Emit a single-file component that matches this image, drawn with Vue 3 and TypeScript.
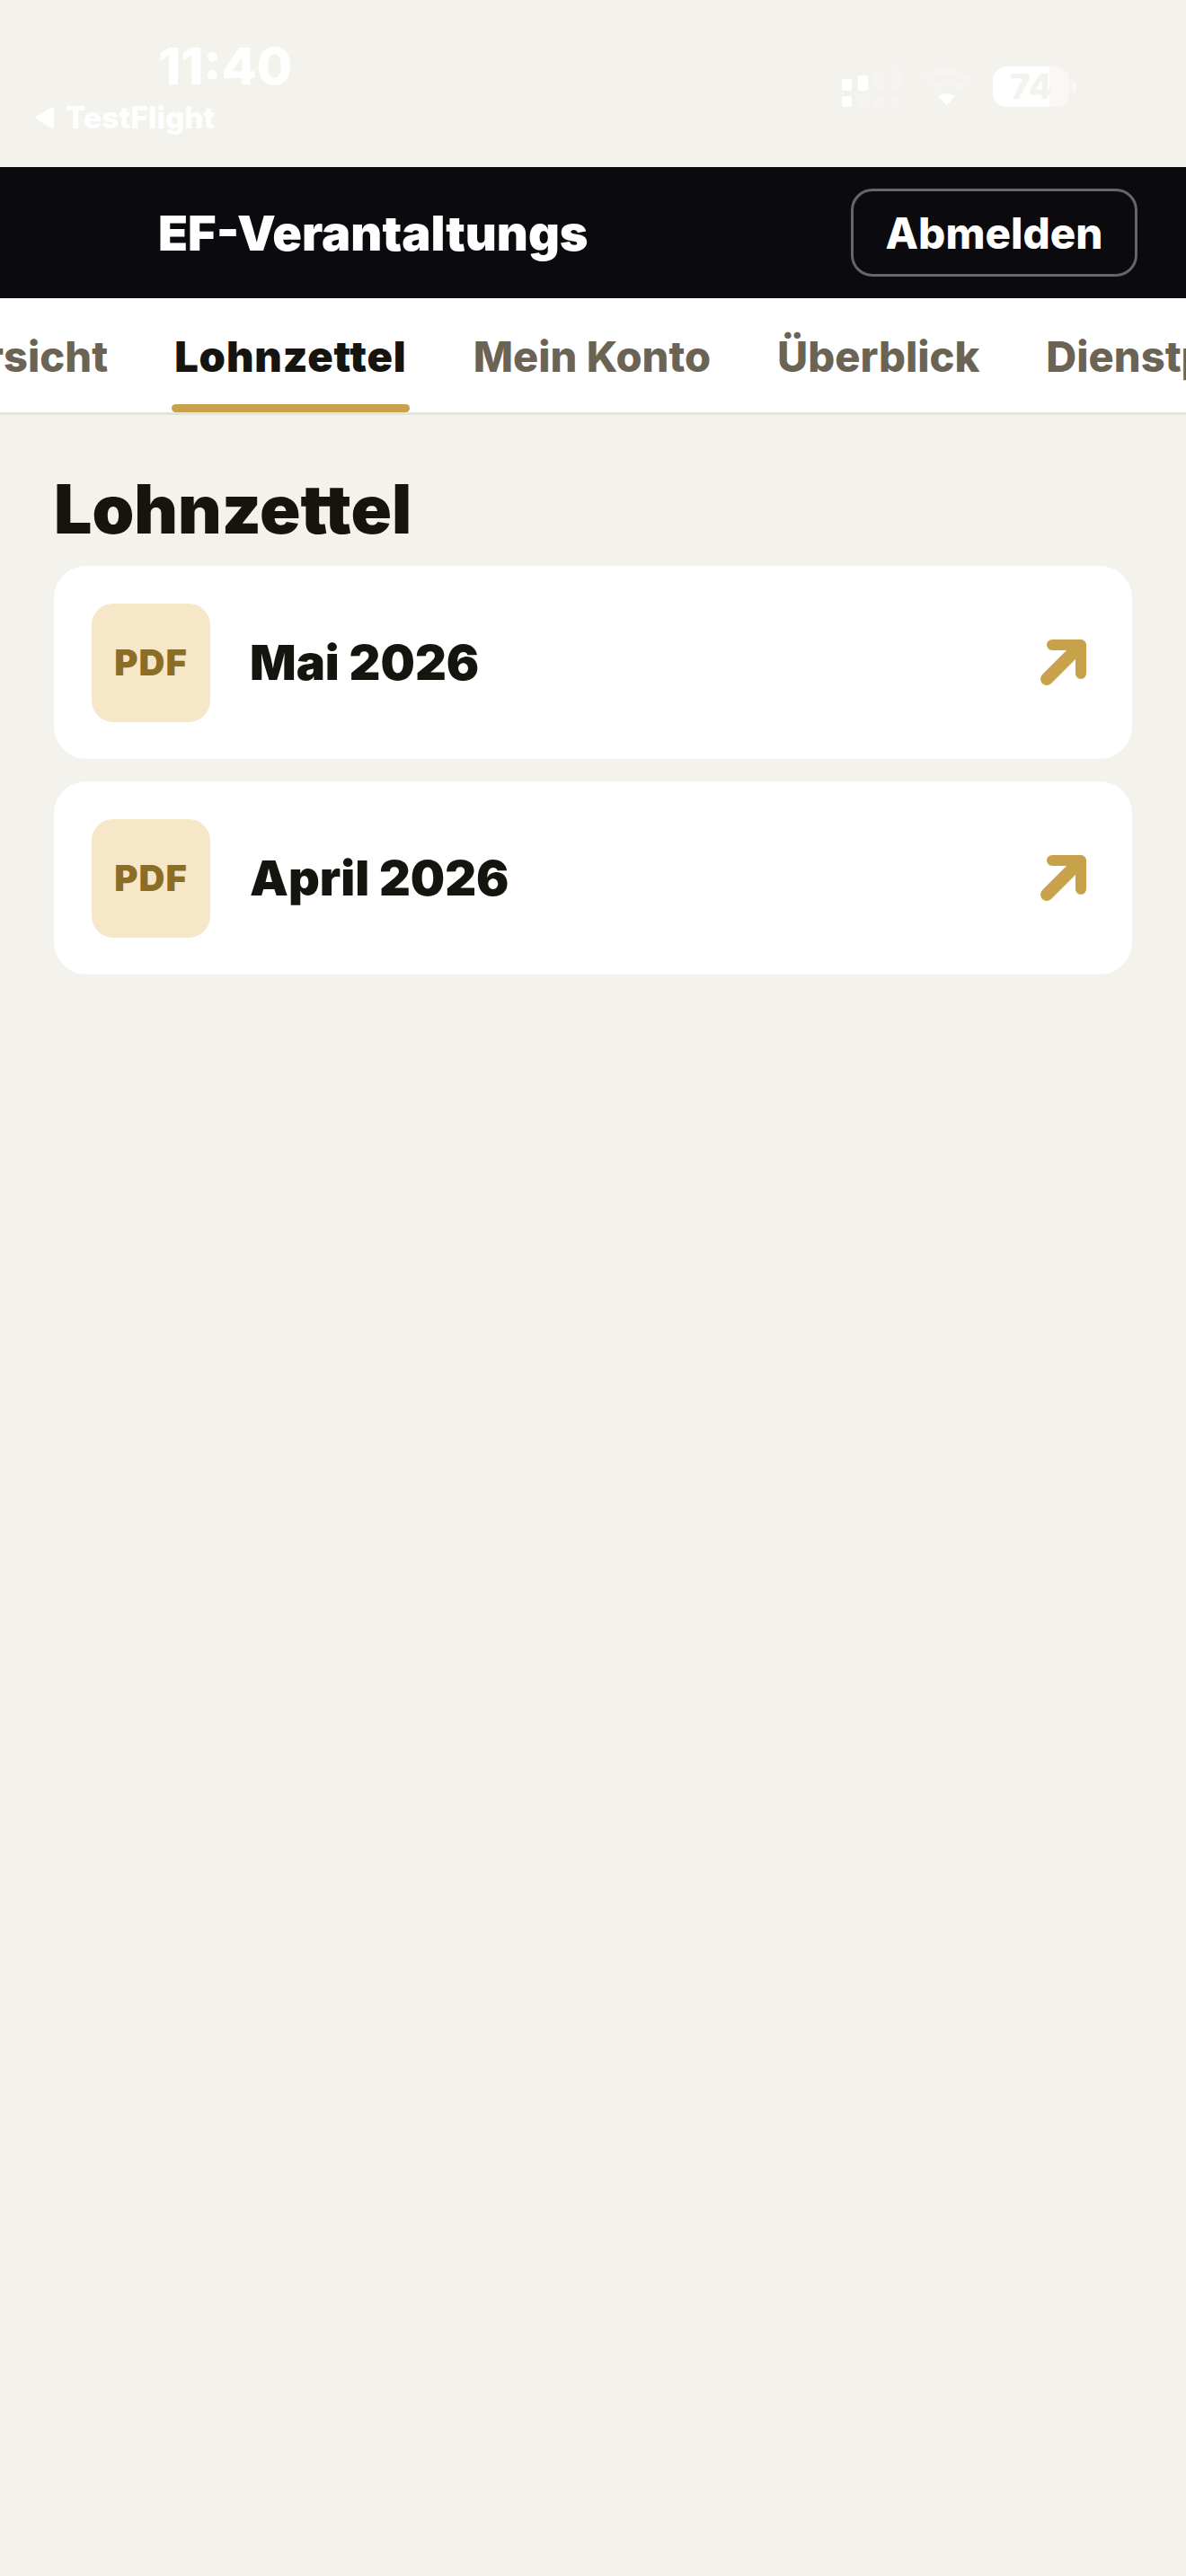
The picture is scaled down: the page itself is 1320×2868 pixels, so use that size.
<script setup lang="ts">
interface Slip {
  label: string;
}

const tabs = ['Übersicht', 'Lohnzettel', 'Mein Konto', 'Überblick', 'Dienstplan'];
const activeTab = 'Lohnzettel';
const slips: Slip[] = [{ label: 'Mai 2026' }, { label: 'April 2026' }];
</script>

<template>
  <div class="page">
    <div class="status">
      <div class="status-left">
        <div class="time">11:40</div>
        <div class="back">
          <svg class="back-arrow" width="21" height="24" viewBox="0 0 21 24">
            <path d="M18 0.5 L1.5 10.5 Q-0.5 12 1.5 13.5 L18 23.5 Q21 24.5 21 21 V3 Q21 -0.5 18 0.5 Z" fill="#fff" />
          </svg>
          <span>TestFlight</span>
        </div>
      </div>
      <div class="status-right">
        <svg class="signal" width="65" height="45" viewBox="0 0 65 45">
          <rect x="0" y="14" width="11" height="13" rx="3" fill="#fff" />
          <rect x="18" y="10" width="11" height="17" rx="3" fill="#fff" />
          <rect x="36" y="4" width="11" height="23" rx="3" fill="#fff" opacity="0.2" />
          <rect x="54" y="0" width="11" height="27" rx="3" fill="#fff" opacity="0.2" />
          <rect x="0" y="33" width="11" height="12" rx="3" fill="#fff" />
          <rect x="18" y="33" width="11" height="12" rx="3" fill="#fff" opacity="0.2" />
          <rect x="36" y="33" width="11" height="12" rx="3" fill="#fff" opacity="0.2" />
          <rect x="54" y="33" width="11" height="12" rx="3" fill="#fff" opacity="0.2" />
        </svg>
        <svg class="wifi" width="57" height="42" viewBox="0 0 57 42">
          <path d="M19 31 Q28.5 25 38 31 L28.5 41 Z" fill="#fff" />
          <path d="M12 22 Q28.5 10 45 22" fill="none" stroke="#fff" stroke-width="7" opacity="0.2" />
          <path d="M3 13 Q28.5 -7 54 13" fill="none" stroke="#fff" stroke-width="7" opacity="0.2" />
        </svg>
        <div class="battery"><span>74</span></div>
        <div class="battery-nub"></div>
      </div>
    </div>

    <header class="topbar">
      <div class="brand">EF-Verantaltungs</div>
      <button class="logout">Abmelden</button>
    </header>

    <nav class="tabs">
      <div class="tab-track">
        <div v-for="tab in tabs" :key="tab" class="tab" :class="{ active: tab === activeTab }">{{ tab }}</div>
      </div>
    </nav>

    <main class="content">
      <h1>Lohnzettel</h1>
      <div class="list">
        <div v-for="slip in slips" :key="slip.label" class="card">
          <div class="pdf">PDF</div>
          <div class="name">{{ slip.label }}</div>
          <svg class="open" width="51" height="51" viewBox="0 0 51 51">
            <path d="M7 44 L44 7" fill="none" stroke="#c8a24a" stroke-width="14" stroke-linecap="round" />
            <path d="M13 6 H45 V38" fill="none" stroke="#c8a24a" stroke-width="12" stroke-linecap="round" stroke-linejoin="round" />
          </svg>
        </div>
      </div>
    </main>
  </div>
</template>

<style scoped>
.page {
  height: 2868px;
  background: #f4f2ed;
  font-family: Inter, "Liberation Sans", sans-serif;
  overflow: hidden;
}

.status {
  height: 186px;
  box-sizing: border-box;
  display: flex;
  justify-content: space-between;
  padding: 0 122px 0 39px;
  color: #fff;
}

.status-left {
  padding-top: 42px;
}

.time {
  font-size: 57px;
  line-height: 64px;
  font-weight: 800;
  padding-left: 137px;
}

.back {
  display: flex;
  align-items: center;
  gap: 13px;
  font-size: 33.5px;
  line-height: 40px;
  font-weight: 800;
  margin-top: 5px;
}

.status-right {
  display: flex;
  align-items: flex-start;
  padding-top: 74px;
}

.wifi {
  margin: 2px 23px 0 23px;
}

.battery {
  width: 85px;
  height: 45px;
  border-radius: 15px;
  background: linear-gradient(90deg, #fff 74%, rgba(255, 255, 255, 0.45) 74%);
  color: #f4f2ed;
  font-size: 38px;
  line-height: 45px;
  font-weight: 800;
  text-align: center;
}

.battery-nub {
  width: 5px;
  height: 14px;
  margin: 16px 0 0 3px;
  border-radius: 0 5px 5px 0;
  background: rgba(255, 255, 255, 0.5);
}

.topbar {
  height: 146px;
  box-sizing: border-box;
  background: #0a0a0f;
  display: flex;
  align-items: center;
  justify-content: space-between;
  padding: 0 54px 0 176px;
}

.brand {
  color: #fff;
  font-size: 54px;
  font-weight: 900;
}

.logout {
  width: 319px;
  height: 98px;
  box-sizing: border-box;
  padding: 0;
  border: 3px solid #66666a;
  border-radius: 24px;
  background: transparent;
  color: #fff;
  font-family: inherit;
  font-size: 47.5px;
  font-weight: 800;
}

.tabs {
  height: 130px;
  box-sizing: border-box;
  background: #fff;
  border-bottom: 3px solid #e8e3d8;
  overflow: hidden;
}

.tab-track {
  display: flex;
  gap: 68px;
  height: 127px;
  margin-left: -111px;
  width: 2000px;
}

.tab {
  box-sizing: border-box;
  height: 127px;
  padding: 37px 3px 0;
  font-size: 47px;
  line-height: 56px;
  font-weight: 800;
  color: #6b6455;
  white-space: nowrap;
}

.tab.active {
  color: #15140e;
  letter-spacing: 0.9px;
  font-weight: 900;
  position: relative;
}

.tab.active::after {
  content: "";
  position: absolute;
  left: 0;
  right: 0;
  bottom: 0;
  height: 9px;
  border-radius: 5px;
  background: #c8a24a;
}

.content {
  padding: 62px 60px 0;
}

h1 {
  margin: 0 0 20px;
  font-size: 75px;
  line-height: 86px;
  font-weight: 900;
  color: #15140e;
}

.list {
  display: flex;
  flex-direction: column;
  gap: 25px;
}

.card {
  height: 215px;
  box-sizing: border-box;
  padding: 0 51px 0 42px;
  border-radius: 36px;
  background: #fff;
  display: flex;
  align-items: center;
}

.pdf {
  width: 132px;
  height: 132px;
  border-radius: 24px;
  background: #f5e7c8;
  color: #8b6d25;
  font-size: 40px;
  font-weight: 900;
  letter-spacing: 1px;
  display: flex;
  align-items: center;
  justify-content: center;
}

.name {
  flex: 1;
  margin-left: 44px;
  font-size: 54px;
  font-weight: 900;
  color: #15140e;
}
</style>

<style>
html,
body {
  background: #f4f2ed;
}
</style>
